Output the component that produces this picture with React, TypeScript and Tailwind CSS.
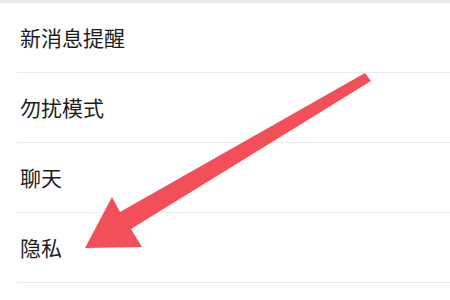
import React from 'react';

const items = ['新消息提醒', '勿扰模式', '聊天', '隐私'];

export default function App() {
  return (
    <div
      className="relative w-[450px] h-[300px] overflow-hidden bg-white"
      style={{ fontFamily: '"Noto Sans CJK SC", "Noto Sans", sans-serif' }}
    >
      <div className="h-[3px] bg-[#ebebeb]" />
      <div className="flex flex-col">
        {items.map((label) => (
          <div key={label} className="pl-[17px]">
            <div className="h-[70px] flex items-center pl-[3px] border-b border-[#ececec]">
              <span className="text-[21px] text-[#1c1c1c] leading-none">{label}</span>
            </div>
          </div>
        ))}
      </div>

      {/* red arrow drawn over the list */}
      <svg className="absolute left-0 top-0" width="450" height="300" viewBox="0 0 450 300">
        <polygon
          points="365,73 371,81 131,229 142,247 85,248 112,197 120,212"
          fill="#f34f59"
        />
      </svg>
    </div>
  );
}
